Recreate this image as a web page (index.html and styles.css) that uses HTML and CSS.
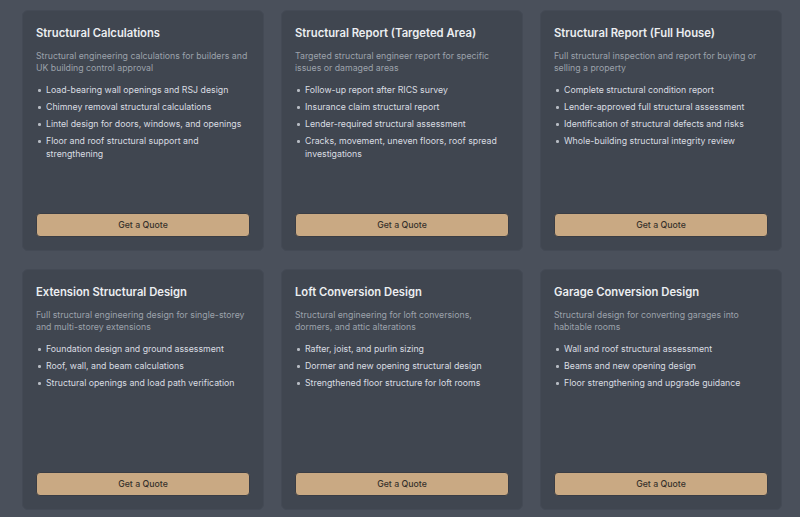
FILE: index.html
```html
<!DOCTYPE html>
<html>
  <head>
    <title>Structural Services</title>
    <link rel="stylesheet" href="styles.css">
  </head>
  <body>
    <div class="services">
      <div class="card">
        <h2>Structural Calculations</h2>
        <p class="desc">Structural engineering calculations for builders and UK building control approval</p>
        <ul>
          <li>Load-bearing wall openings and RSJ design</li>
          <li>Chimney removal structural calculations</li>
          <li>Lintel design for doors, windows, and openings</li>
          <li>Floor and roof structural support and strengthening</li>
        </ul>
        <button class="quote">Get a Quote</button>
      </div>
      <div class="card">
        <h2>Structural Report (Targeted Area)</h2>
        <p class="desc">Targeted structural engineer report for specific issues or damaged areas</p>
        <ul>
          <li>Follow-up report after RICS survey</li>
          <li>Insurance claim structural report</li>
          <li>Lender-required structural assessment</li>
          <li>Cracks, movement, uneven floors, roof spread investigations</li>
        </ul>
        <button class="quote">Get a Quote</button>
      </div>
      <div class="card">
        <h2>Structural Report (Full House)</h2>
        <p class="desc">Full structural inspection and report for buying or selling a property</p>
        <ul>
          <li>Complete structural condition report</li>
          <li>Lender-approved full structural assessment</li>
          <li>Identification of structural defects and risks</li>
          <li>Whole-building structural integrity review</li>
        </ul>
        <button class="quote">Get a Quote</button>
      </div>
      <div class="card">
        <h2>Extension Structural Design</h2>
        <p class="desc">Full structural engineering design for single-storey and multi-storey extensions</p>
        <ul>
          <li>Foundation design and ground assessment</li>
          <li>Roof, wall, and beam calculations</li>
          <li>Structural openings and load path verification</li>
        </ul>
        <button class="quote">Get a Quote</button>
      </div>
      <div class="card">
        <h2>Loft Conversion Design</h2>
        <p class="desc">Structural engineering for loft conversions, dormers, and attic alterations</p>
        <ul>
          <li>Rafter, joist, and purlin sizing</li>
          <li>Dormer and new opening structural design</li>
          <li>Strengthened floor structure for loft rooms</li>
        </ul>
        <button class="quote">Get a Quote</button>
      </div>
      <div class="card">
        <h2>Garage Conversion Design</h2>
        <p class="desc">Structural design for converting garages into habitable rooms</p>
        <ul>
          <li>Wall and roof structural assessment</li>
          <li>Beams and new opening design</li>
          <li>Floor strengthening and upgrade guidance</li>
        </ul>
        <button class="quote">Get a Quote</button>
      </div>
    </div>
  </body>
</html>
```

FILE: styles.css
```css
body {
  margin: 0;
  background-color: #4a505b;
  font-family: Inter, "Noto Sans", sans-serif;
}

.services {
  display: grid;
  grid-template-columns: repeat(3, 242px);
  grid-auto-rows: 241px;
  column-gap: 17px;
  row-gap: 18px;
  padding: 10px 18px 0 22px;
}

.card {
  display: flex;
  flex-direction: column;
  padding: 14px 13px 13px 13px;
  background-color: #404650;
  border: 1px solid #444a55;
  border-radius: 6px;
  box-sizing: border-box;
}

.card h2 {
  margin: 0;
  font-size: 11.25px;
  font-weight: 600;
  line-height: 16px;
  color: #eceef1;
}

.desc {
  margin: 8.5px 0 0 0;
  font-size: 8.75px;
  line-height: 12.5px;
  color: #9ca2ab;
}

.card ul {
  margin: 9.5px 0 0 0;
  padding: 0 0 0 10px;
  list-style: none;
}

.card li {
  position: relative;
  margin-bottom: 4.5px;
  font-size: 8.75px;
  line-height: 12.5px;
  color: #dadde2;
}

.card li::before {
  content: "";
  position: absolute;
  left: -8px;
  top: 5px;
  width: 2.5px;
  height: 2.5px;
  border-radius: 50%;
  background-color: #b7bcc4;
}

.quote {
  margin-top: auto;
  height: 24px;
  border: 1px solid #3a3d44;
  border-radius: 4px;
  background-color: #c9a983;
  color: #37312b;
  font-family: Inter, "Noto Sans", sans-serif;
  font-size: 8.75px;
  font-weight: 500;
  cursor: pointer;
}
```
